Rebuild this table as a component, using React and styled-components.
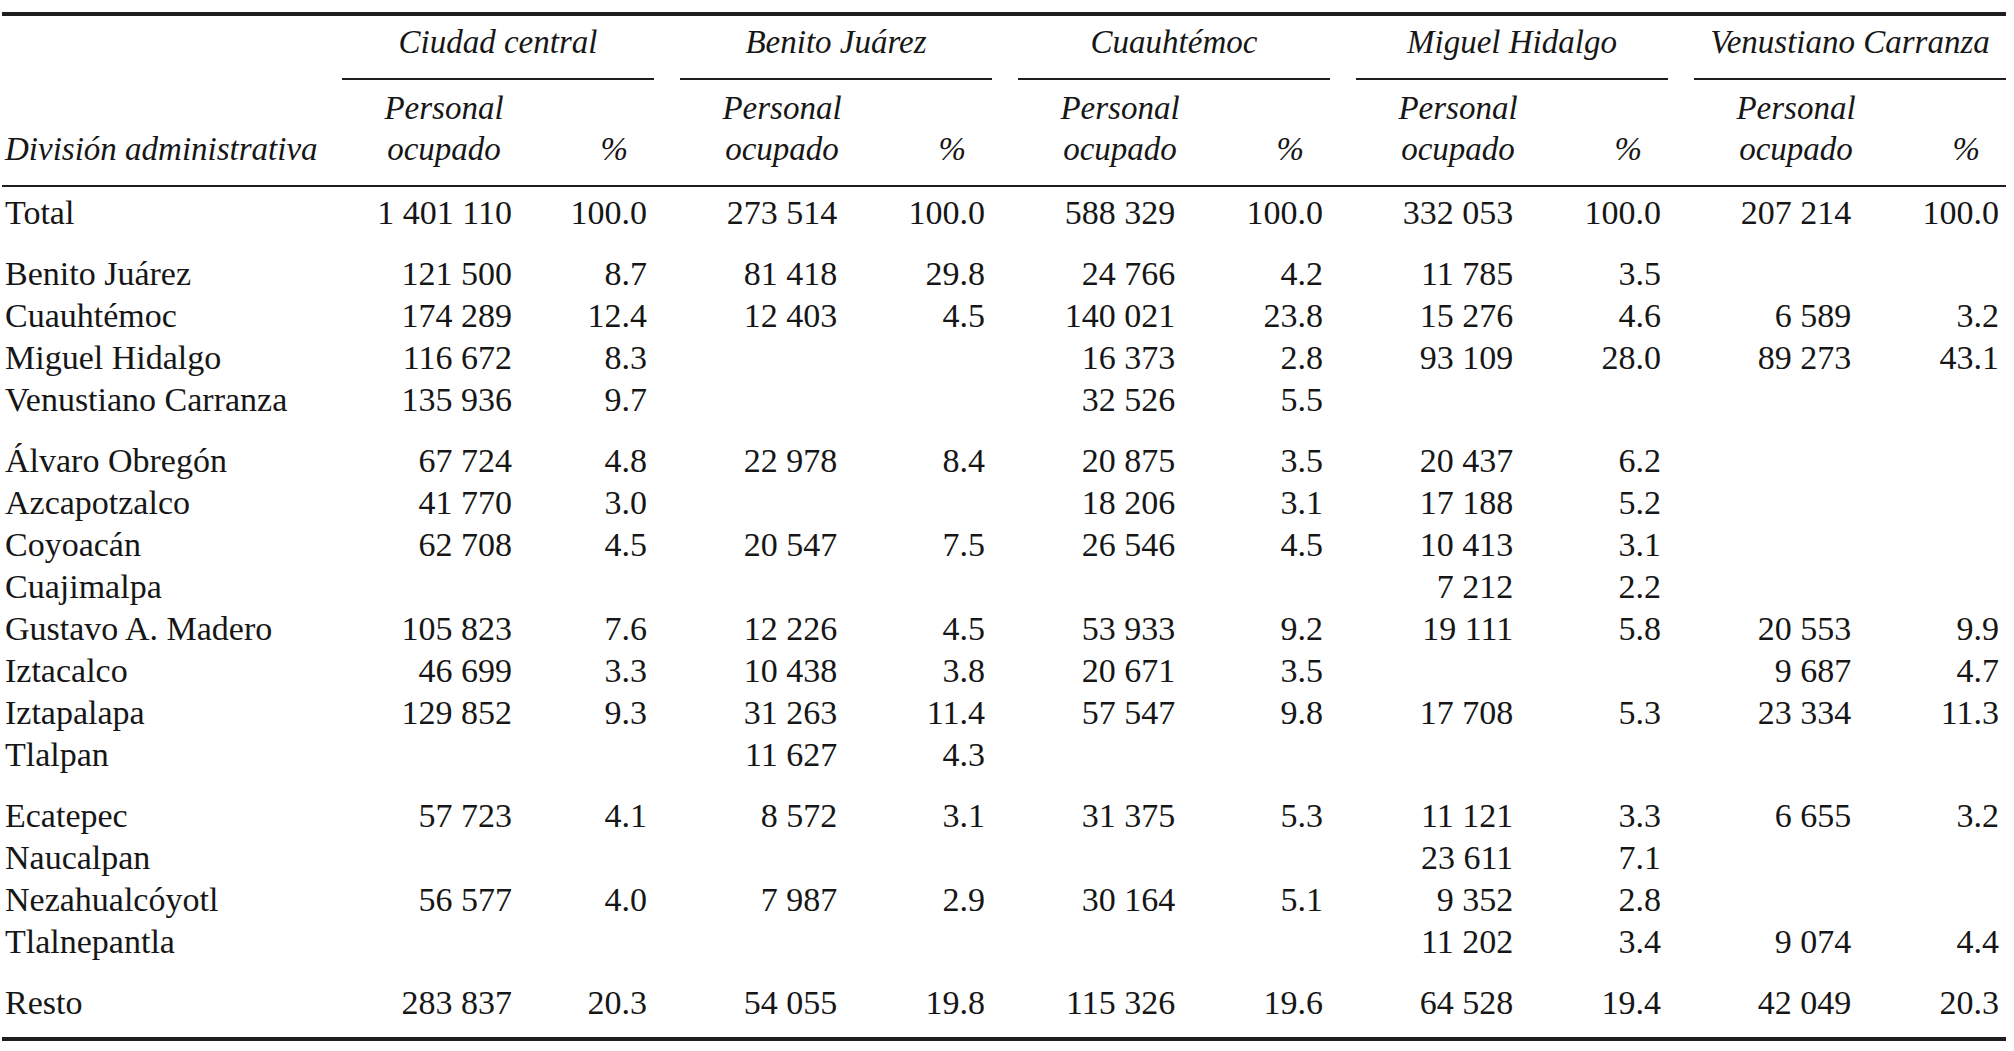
import React from 'react';
import styled, { createGlobalStyle } from 'styled-components';

const GlobalStyle = createGlobalStyle`
  html, body {
    margin: 0;
    padding: 0;
    background: #ffffff;
  }
  body {
    font-family: "Liberation Serif", "Times New Roman", serif;
    color: #161616;
  }
`;

// widths of the column parts (px)
const LABEL_W = 340;
const NUM_W = 204;
const PCT_W = 108;
const LEAD = 26;

const groups = [
  { name: 'Ciudad central', widest: 4 },
  { name: 'Benito Juárez', widest: 3.25 },
  { name: 'Cuauhtémoc', widest: 3.25 },
  { name: 'Miguel Hidalgo', widest: 3.25 },
  { name: 'Venustiano Carranza', widest: 3.25 },
];

const e = null;

const sections = [
  [
    ['Total', '1 401 110', '100.0', '273 514', '100.0', '588 329', '100.0', '332 053', '100.0', '207 214', '100.0'],
  ],
  [
    ['Benito Juárez', '121 500', '8.7', '81 418', '29.8', '24 766', '4.2', '11 785', '3.5', e, e],
    ['Cuauhtémoc', '174 289', '12.4', '12 403', '4.5', '140 021', '23.8', '15 276', '4.6', '6 589', '3.2'],
    ['Miguel Hidalgo', '116 672', '8.3', e, e, '16 373', '2.8', '93 109', '28.0', '89 273', '43.1'],
    ['Venustiano Carranza', '135 936', '9.7', e, e, '32 526', '5.5', e, e, e, e],
  ],
  [
    ['Álvaro Obregón', '67 724', '4.8', '22 978', '8.4', '20 875', '3.5', '20 437', '6.2', e, e],
    ['Azcapotzalco', '41 770', '3.0', e, e, '18 206', '3.1', '17 188', '5.2', e, e],
    ['Coyoacán', '62 708', '4.5', '20 547', '7.5', '26 546', '4.5', '10 413', '3.1', e, e],
    ['Cuajimalpa', e, e, e, e, e, e, '7 212', '2.2', e, e],
    ['Gustavo A. Madero', '105 823', '7.6', '12 226', '4.5', '53 933', '9.2', '19 111', '5.8', '20 553', '9.9'],
    ['Iztacalco', '46 699', '3.3', '10 438', '3.8', '20 671', '3.5', e, e, '9 687', '4.7'],
    ['Iztapalapa', '129 852', '9.3', '31 263', '11.4', '57 547', '9.8', '17 708', '5.3', '23 334', '11.3'],
    ['Tlalpan', e, e, '11 627', '4.3', e, e, e, e, e, e],
  ],
  [
    ['Ecatepec', '57 723', '4.1', '8 572', '3.1', '31 375', '5.3', '11 121', '3.3', '6 655', '3.2'],
    ['Naucalpan', e, e, e, e, e, e, '23 611', '7.1', e, e],
    ['Nezahualcóyotl', '56 577', '4.0', '7 987', '2.9', '30 164', '5.1', '9 352', '2.8', e, e],
    ['Tlalnepantla', e, e, e, e, e, e, '11 202', '3.4', '9 074', '4.4'],
  ],
  [
    ['Resto', '283 837', '20.3', '54 055', '19.8', '115 326', '19.6', '64 528', '19.4', '42 049', '20.3'],
  ],
];

const Page = styled.div`
  padding: 12px 0 0 2px;
`;

const Table = styled.table`
  border-collapse: collapse;
  table-layout: fixed;
  width: ${LABEL_W + NUM_W + PCT_W + 4 * (LEAD + NUM_W + PCT_W)}px;
  font-size: 34px;
  border-top: 4px solid #1e1e1e;
  border-bottom: 4px solid #1e1e1e;
`;

const Col = styled.col`
  width: ${(p) => p.$w}px;
`;

const GroupCell = styled.th`
  padding: 6px 0 0 ${(p) => (p.$lead ? LEAD : 0)}px;
  font-weight: normal;
  font-style: italic;
  font-size: 33px;
  line-height: 41px;
  white-space: nowrap;
`;

const GroupTitle = styled.div`
  padding-bottom: 15px;
  border-bottom: 2px solid #1e1e1e;
  text-align: center;
`;

const SubHeadRow = styled.tr`
  border-bottom: 2px solid #1e1e1e;
`;

const SubHead = styled.th`
  padding: 8px ${(p) => p.$right || 0}px 15px ${(p) => p.$left || 0}px;
  font-weight: normal;
  font-style: italic;
  font-size: 33px;
  line-height: 41px;
  text-align: ${(p) => p.$align || 'center'};
  vertical-align: bottom;
  white-space: nowrap;
`;

const Cell = styled.td`
  padding: ${(p) => p.$top}px 0 ${(p) => p.$bottom}px 0;
  line-height: 42px;
  white-space: nowrap;
  vertical-align: top;
`;

const Label = styled(Cell)`
  padding-left: 3px;
  text-align: left;
`;

const Num = styled(Cell)`
  text-align: right;
  padding-left: ${(p) => (p.$lead ? LEAD : 0)}px;
  padding-right: calc((${NUM_W}px - ${(p) => p.$widest}em) / 2);
`;

const Pct = styled(Cell)`
  text-align: right;
  padding-right: 7px;
`;

function DataRow({ row, top, bottom }) {
  const [label, ...vals] = row;
  return (
    <tr>
      <Label $top={top} $bottom={bottom}>{label}</Label>
      {groups.map((g, i) => (
        <React.Fragment key={g.name}>
          <Num $top={top} $bottom={bottom} $lead={i > 0} $widest={g.widest}>
            {vals[i * 2] ? vals[i * 2].replace(/ /g, '\u00a0') : ''}
          </Num>
          <Pct $top={top} $bottom={bottom}>{vals[i * 2 + 1] || ''}</Pct>
        </React.Fragment>
      ))}
    </tr>
  );
}

export default function App() {
  return (
    <>
      <GlobalStyle />
      <Page>
        <Table>
          <colgroup>
            <Col $w={LABEL_W} />
            {groups.map((g, i) => (
              <React.Fragment key={g.name}>
                <Col $w={NUM_W + (i > 0 ? LEAD : 0)} />
                <Col $w={PCT_W} />
              </React.Fragment>
            ))}
          </colgroup>
          <thead>
            <tr>
              <GroupCell />
              {groups.map((g, i) => (
                <GroupCell key={g.name} colSpan={2} $lead={i > 0}>
                  <GroupTitle>{g.name}</GroupTitle>
                </GroupCell>
              ))}
            </tr>
            <SubHeadRow>
              <SubHead $align="left" $left={3}>División administrativa</SubHead>
              {groups.map((g, i) => (
                <React.Fragment key={g.name}>
                  <SubHead $left={i > 0 ? LEAD : 0}>
                    Personal
                    <br />
                    ocupado
                  </SubHead>
                  <SubHead $align="right" $right={26}>%</SubHead>
                </React.Fragment>
              ))}
            </SubHeadRow>
          </thead>
          <tbody>
            {sections.map((rows, si) =>
              rows.map((row, ri) => {
                let top = 0;
                if (ri === 0) top = si === 0 ? 5 : 19;
                const bottom = si === sections.length - 1 ? 13 : 0;
                return <DataRow key={row[0]} row={row} top={top} bottom={bottom} />;
              })
            )}
          </tbody>
        </Table>
      </Page>
    </>
  );
}
